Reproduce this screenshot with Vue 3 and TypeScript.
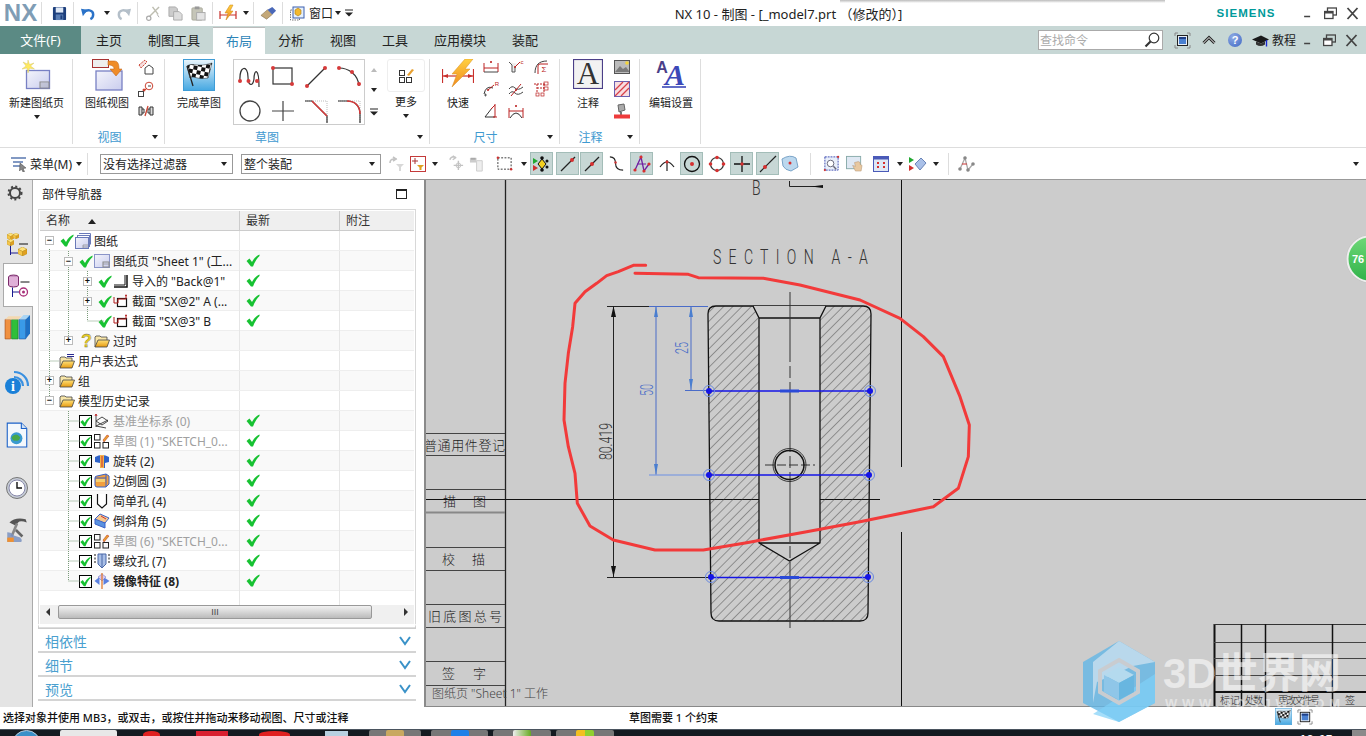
<script setup lang="ts">
interface Tool {
  id: string
  x: number
  w: number
  on?: boolean
  label?: string
  cls?: string
  s?: number
  ml?: number
}

// place tools left to right, the gap comes from where the next one should start
const flow = (items: Tool[], start = 0): Tool[] => {
  let cur = start
  return items.map((t) => {
    const out = { ...t, ml: t.x - cur }
    cur = t.x + t.w
    return out
  })
}
const sep = (x: number): Tool => ({ id: 'sep', x, w: 1 })
const dd = (x: number): Tool => ({ id: 'dd', x, w: 7 })

const titleTools = flow([
  { id: 'text', x: 4, w: 33, label: 'NX', cls: 'nx' },
  sep(41),
  { id: 'save', x: 52, w: 15 },
  sep(73),
  { id: 'undo', x: 81, w: 15 },
  dd(103),
  { id: 'redo', x: 116, w: 15 },
  sep(137),
  { id: 'cut', x: 145, w: 15 },
  { id: 'copy', x: 168, w: 15 },
  { id: 'paste', x: 191, w: 15 },
  sep(212),
  { id: 'dimq', x: 219, w: 18 },
  dd(242),
  sep(253),
  { id: 'eraser', x: 260, w: 17 },
  sep(282),
  { id: 'win', x: 290, w: 16 },
  { id: 'text', x: 309, w: 24, label: '窗口' },
  dd(334),
  { id: 'more', x: 345, w: 8 },
  { id: 'text', x: 673, w: 231, label: 'NX 10 - 制图 - [_model7.prt （修改的）]', cls: 'title' },
  { id: 'text', x: 1215, w: 62, label: 'SIEMENS', cls: 'siemens' },
  { id: 'min', x: 1303, w: 9 },
  { id: 'rest', x: 1324, w: 13 },
  { id: 'close', x: 1346, w: 13 },
])

const tabs = ['主页', '制图工具', '布局', '分析', '视图', '工具', '应用模块', '装配']

const tabTools = flow([
  { id: 'full', x: 1174, w: 17 },
  { id: 'up', x: 1202, w: 14 },
  { id: 'text', x: 1228, w: 14, label: '?', cls: 'helpbtn' },
  { id: 'hat', x: 1252, w: 17 },
  { id: 'text', x: 1272, w: 24, label: '教程' },
  { id: 'min', x: 1303, w: 9 },
  { id: 'rest', x: 1323, w: 13 },
  { id: 'close', x: 1345, w: 13 },
], 1163)

const selTools = flow([
  { id: 'f1', x: 390, w: 16 },
  { id: 'f2', x: 411, w: 16 },
  dd(432),
  { id: 's1', x: 449, w: 17 },
  { id: 's2', x: 470, w: 17 },
  { id: 's3', x: 497, w: 17 },
  dd(521),
  { id: 's4', x: 531, w: 23, s: 18, on: true },
  { id: 's5', x: 557, w: 23, s: 18, on: true },
  { id: 's6', x: 581, w: 23, s: 18, on: true },
  { id: 's7', x: 609, w: 17 },
  { id: 's8', x: 631, w: 23, s: 18, on: true },
  { id: 's9', x: 659, w: 18 },
  { id: 's10', x: 681, w: 23, s: 18, on: true },
  { id: 's11', x: 709, w: 18 },
  { id: 's12', x: 731, w: 23, s: 18, on: true },
  { id: 's13', x: 757, w: 23, s: 18, on: true },
  { id: 's14', x: 782, w: 18 },
  sep(811),
  { id: 's15', x: 824, w: 17 },
  { id: 's16', x: 847, w: 17 },
  { id: 's17', x: 874, w: 16 },
  dd(897),
  { id: 's18', x: 910, w: 18 },
  dd(933),
  sep(949),
  { id: 's19', x: 958, w: 18 },
  dd(1353),
], 382)

interface Row {
  d: number
  exp?: '+' | '-'
  mark?: 'check' | 'q' | 'box'
  icon: string
  text: string
  fresh?: boolean
  gray?: boolean
  bold?: boolean
}

const rows: Row[] = [
  { d: 0, exp: '-', mark: 'check', icon: 'sheets', text: '图纸' },
  { d: 1, exp: '-', mark: 'check', icon: 'sheet1', text: '图纸页 "Sheet 1" (工...', fresh: true },
  { d: 2, exp: '+', mark: 'check', icon: 'back', text: '导入的 "Back@1"', fresh: true },
  { d: 2, exp: '+', mark: 'check', icon: 'section', text: '截面 "SX@2" A (...', fresh: true },
  { d: 2, mark: 'check', icon: 'section', text: '截面 "SX@3" B', fresh: true },
  { d: 1, exp: '+', mark: 'q', icon: 'folder', text: '过时' },
  { d: 0, icon: 'folder2', text: '用户表达式' },
  { d: 0, exp: '+', icon: 'folder', text: '组' },
  { d: 0, exp: '-', icon: 'folder', text: '模型历史记录' },
  { d: 1, mark: 'box', icon: 'csys', text: '基准坐标系 (0)', fresh: true, gray: true },
  { d: 1, mark: 'box', icon: 'sk', text: '草图 (1) "SKETCH_0...', fresh: true, gray: true },
  { d: 1, mark: 'box', icon: 'rev', text: '旋转 (2)', fresh: true },
  { d: 1, mark: 'box', icon: 'blend', text: '边倒圆 (3)', fresh: true },
  { d: 1, mark: 'box', icon: 'hole', text: '简单孔 (4)', fresh: true },
  { d: 1, mark: 'box', icon: 'cham', text: '倒斜角 (5)', fresh: true },
  { d: 1, mark: 'box', icon: 'sk', text: '草图 (6) "SKETCH_0...', fresh: true, gray: true },
  { d: 1, mark: 'box', icon: 'thread', text: '螺纹孔 (7)', fresh: true },
  { d: 1, mark: 'box', icon: 'mirror', text: '镜像特征 (8)', fresh: true, bold: true },
]

const rail = [
  { id: 'r-asm', h: 35, mt: 22 },
  { id: 'r-part', h: 44, mt: 0, active: true },
  { id: 'r-books', h: 40, mt: 0 },
  { id: 'r-info', h: 40, mt: 15 },
  { id: 'r-doc', h: 40, mt: 13 },
  { id: 'r-clock', h: 40, mt: 13 },
  { id: 'r-tools', h: 40, mt: 2 },
]

const gallery = ['g1', 'g2', 'g3', 'g4', 'g5', 'g6', 'g7', 'g8']
const dimSmall = ['d1', 'd4', 'd6', 'd2', 'd5', 'd7', 'd3', 'd8']
// little letters that sit on some of the dimension icons
const dimLetter: Record<string, { t: string; x: number; y: number; s: number }> = {
  d2: { t: 'R', x: 14, y: 5, s: 6 },
  d4: { t: 'c', x: 14, y: 5, s: 6 },
  d6: { t: 'Σ', x: 11, y: 13, s: 8 },
}
const sections = ['相依性', '细节', '预览']

// red pen stroke, read off the zoomed crop (3x, origin 560,240)
const penRaw = [
  [257, 76], [220, 76], [175, 95], [140, 107], [110, 130], [75, 155], [45, 190], [38, 260], [25, 340],
  [15, 430], [12, 540], [25, 620], [45, 700], [52, 790], [90, 858], [160, 900], [285, 930], [430, 930],
  [560, 908], [740, 875], [900, 845], [1120, 800], [1195, 745], [1225, 650], [1228, 555], [1200, 470],
  [1150, 350], [1090, 290], [1020, 235], [900, 180], [720, 135], [610, 115], [415, 113], [385, 103], [225, 100],
]
const pen = penRaw.map(([x, y]) => `${560 + x / 3},${240 + y / 3}`).join(' ')

const nodes = [
  [709, 391], [870, 391], [709, 475], [869, 475], [711, 577], [868, 577],
]
const leftLines = [433, 455, 489, 547, 570, 604, 627, 661, 685]
const blockRows = [642, 658, 675]
const blockCols = [1241, 1265, 1332]
</script>

<template>
  <div class="app">
    <svg class="defs" width="0" height="0">
      <defs>
        <linearGradient id="lav" x1="0" y1="0" x2="1" y2="1"><stop offset="0" stop-color="#f4f4fb" /><stop offset="1" stop-color="#c9cdee" /></linearGradient>
        <linearGradient id="sky" x1="0" y1="0" x2="0" y2="1"><stop offset="0" stop-color="#eaf5fb" /><stop offset="1" stop-color="#45a8e2" /></linearGradient>
        <linearGradient id="fold" x1="0" y1="0" x2="0" y2="1"><stop offset="0" stop-color="#ffe27a" /><stop offset="1" stop-color="#e69a10" /></linearGradient>
        <linearGradient id="bolt" x1="0" y1="0" x2="0" y2="1"><stop offset="0" stop-color="#ffd040" /><stop offset="1" stop-color="#f08a20" /></linearGradient>
        <linearGradient id="ball" x1="0" y1="0" x2="0" y2="1"><stop offset="0" stop-color="#6fd878" /><stop offset="1" stop-color="#30b24a" /></linearGradient>
        <pattern id="chk" width="8" height="8" patternUnits="userSpaceOnUse" patternTransform="rotate(12)">
          <rect width="8" height="8" fill="#fff" /><rect width="4" height="4" fill="#111" /><rect x="4" y="4" width="4" height="4" fill="#111" />
        </pattern>
        <pattern id="hatch" width="6.5" height="6.5" patternUnits="userSpaceOnUse" patternTransform="rotate(45)">
          <line x1="0" y1="0" x2="0" y2="6.5" stroke="#333" stroke-width=".8" />
        </pattern>
      </defs>

      <!-- quick access -->
      <symbol id="save" viewBox="0 0 16 16"><rect x="1" y="1" width="14" height="14" rx="1" fill="#1d3f7c" /><rect x="4" y="1.5" width="8" height="5.5" fill="#dfe8f5" /><rect x="4" y="9" width="8" height="6" fill="#5b7fb5" /><rect x="9" y="10" width="2" height="4" fill="#1d3f7c" /></symbol>
      <symbol id="undo" viewBox="0 0 16 16"><path d="M3 7C6 3 13 4 13 9c0 2-1 4-3 5" fill="none" stroke="#2a72c8" stroke-width="2.6" /><path d="M0 3l7 1-5 7z" fill="#2a72c8" /></symbol>
      <symbol id="redo" viewBox="0 0 16 16"><path d="M13 7C10 3 3 4 3 9c0 2 1 4 3 5" fill="none" stroke="#b4bfc9" stroke-width="2.6" /><path d="M16 3l-7 1 5 7z" fill="#b4bfc9" /></symbol>
      <symbol id="cut" viewBox="0 0 16 16"><path d="M15 1L5 11M8 1l6 8" stroke="#bdbdb0" stroke-width="1.5" /><circle cx="4" cy="13" r="2.3" fill="none" stroke="#aaa" stroke-width="1.3" /><path d="M13 9l2 3" stroke="#aaa" /></symbol>
      <symbol id="copy" viewBox="0 0 16 16"><path d="M1 1h7l2 2v8H1z" fill="#ccc" stroke="#aaa" /><path d="M6 6h6l3 3v6H6z" fill="#ddd" stroke="#aaa" /></symbol>
      <symbol id="paste" viewBox="0 0 16 16"><rect x="1" y="2" width="11" height="13" rx="1" fill="#c5c5b8" stroke="#a9a99a" /><rect x="4" y="0.5" width="5" height="3" fill="#999" /><rect x="6" y="7" width="9" height="8" fill="#e3e3e3" stroke="#aaa" /></symbol>
      <symbol id="dimq" viewBox="0 0 18 16"><path d="M1 6v8M17 6v8M1 10h16" stroke="#c9302c" stroke-width="1.2" /><path d="M11 0L6 8h3l-2 7 7-9h-3l3-6z" fill="url(#bolt)" stroke="#c88010" stroke-width=".5" /></symbol>
      <symbol id="eraser" viewBox="0 0 18 16"><path d="M1 10l7-6 5 5-6 5z" fill="#c4a878" stroke="#857050" stroke-width=".6" /><path d="M8 4l5-3 4 4-4 4z" fill="#4a68b8" /></symbol>
      <symbol id="win" viewBox="0 0 16 16"><rect x="0.5" y="5" width="9" height="10" fill="none" stroke="#777" stroke-dasharray="1.5 1" /><rect x="3" y="2" width="11" height="11" fill="#e6f0fa" stroke="#3a5fb0" /><path d="M5 5l3-2 3 2v4l-3 2-3-2z" fill="#f3b92e" stroke="#a87a10" stroke-width=".6" /></symbol>
      <symbol id="more" viewBox="0 0 8 8"><path d="M0 1h8" stroke="#222" /><path d="M0 3.500h8L4 7.500z" fill="#222" /></symbol>
      <symbol id="min" viewBox="0 0 9 12"><rect y="9" width="8" height="2" fill="#444" /></symbol>
      <symbol id="rest" viewBox="0 0 13 12"><rect x="3.500" y="0.500" width="9" height="7" fill="none" stroke="#444" stroke-width="1.300" /><rect x="0.600" y="4" width="8.400" height="7" fill="#fff" stroke="#444" stroke-width="1.300" /><rect x="0.600" y="4" width="8.400" height="2" fill="#444" /></symbol>
      <symbol id="close" viewBox="0 0 13 12"><path d="M1.500 0.500l10 11M11.500 0.500l-10 11" stroke="#444" stroke-width="1.800" /></symbol>
      <symbol id="full" viewBox="0 0 17 17"><path d="M1 4V1h3M13 1h3v3M16 13v3h-3M4 16H1v-3" fill="none" stroke="#888" /><rect x="3.500" y="3.500" width="10" height="10" fill="#e8eef6" stroke="#222" /><rect x="5" y="5" width="7" height="7" fill="#4a80d0" /><rect x="5" y="5" width="7" height="2" fill="#1e3f88" /></symbol>
      <symbol id="up" viewBox="0 0 14 14"><path d="M1.500 10L7 4.500 12.500 10" fill="none" stroke="#222" stroke-width="3" /><path d="M1.500 10L7 4.500 12.500 10" fill="none" stroke="#fff" stroke-width="1" /></symbol>
      <symbol id="hat" viewBox="0 0 17 14"><path d="M0 6l9-4 8 4-8 4z" fill="#1a1a1a" /><path d="M4 8v3c3 2 6 2 9 0V8L9 10z" fill="#333" /><path d="M14.500 6.500V13" stroke="#1a2ad0" stroke-width="1.400" /></symbol>
      <symbol id="search" viewBox="0 0 16 16"><circle cx="10" cy="6" r="4.800" fill="#fff" stroke="#333" stroke-width="1.200" /><path d="M6.500 9.500L1.500 14.500" stroke="#333" stroke-width="2.200" /></symbol>

      <!-- ribbon large -->
      <symbol id="newsheet" viewBox="0 0 30 32"><rect x="4.500" y="11.500" width="23" height="18" fill="url(#lav)" stroke="#7880c4" stroke-width="1.300" /><rect x="18" y="23" width="9" height="6" fill="none" stroke="#888" /><path d="M18 25h9M18 27h9" stroke="#999" stroke-width=".6" /><path d="M6 1l1.500 4.500L12 4 8.500 7l4 3-5-.8L6 14 5 9 0 10l4-3L1 3l4.500 2z" fill="#ffe95e" stroke="#cfc060" stroke-width=".4" /></symbol>
      <symbol id="sheetview" viewBox="0 0 32 32"><rect x="1.500" y="0.500" width="16" height="8" fill="#eee" stroke="#a83232" /><rect x="5" y="12" width="26" height="19" fill="url(#lav)" stroke="#7880c4" stroke-width="1.300" /><path d="M17 2h6c4 0 5 3 5 8h3l-6 7-6-7h4c0-2-1-4-6-4z" fill="#ef8c28" stroke="#b85a10" stroke-width=".5" /></symbol>
      <symbol id="flag" viewBox="0 0 32 32"><rect x="0.500" y="0.500" width="31" height="31" fill="url(#sky)" stroke="#3f9cd6" /><path d="M4 7C10 3 14 9 29 4L25 19C13 21 11 16 7 19z" fill="url(#chk)" stroke="#222" stroke-width=".5" /><path d="M4 7l6 20" stroke="#222" stroke-width="1.300" /></symbol>
      <symbol id="boltl" viewBox="0 0 32 30"><path d="M0.500 10v14M31.500 10v14" stroke="#c9302c" stroke-width="1.200" /><path d="M1 17h30" stroke="#c9302c" stroke-width="1.200" /><path d="M1 17l5-2v4zM31 17l-5-2v4z" fill="#c9302c" /><path d="M23 0h8l-8 10h5L10 28l5-13h-5z" fill="url(#bolt)" stroke="#d89020" stroke-width=".5" /></symbol>
      <symbol id="pic" viewBox="0 0 16 16"><rect x="0.500" y="1.500" width="15" height="13" fill="#bbb" stroke="#555" /><path d="M1 13l5-6 3 3 3-2 3 4v1H1z" fill="#7a7a7a" /><circle cx="13" cy="4" r="1.800" fill="#f3d43a" /></symbol>
      <symbol id="hatchi" viewBox="0 0 16 16"><rect x="0.500" y="0.500" width="15" height="15" fill="#f8dde0" stroke="#6a60b0" /><path d="M1 9l8-8M1 15L15 1M7 15l8-8" stroke="#d8404a" stroke-width="1.300" /></symbol>
      <symbol id="paint" viewBox="0 0 16 16"><path d="M4 2l6-1 1 6-6 2z" fill="#aaa" stroke="#666" /><path d="M7 9v3" stroke="#777" stroke-width="2" /><rect x="0" y="11.500" width="16" height="4" fill="#ee3b3b" /></symbol>

      <!-- ribbon small -->
      <symbol id="v1" viewBox="0 0 16 16"><path d="M1 6l6-5 2 2-6 6z" fill="#f6dede" stroke="#c43" stroke-dasharray="2 1" /><path d="M7 9l4-3 4 3v6H7z" fill="#fff" stroke="#444" /></symbol>
      <symbol id="v2" viewBox="0 0 16 16"><circle cx="11" cy="5" r="3.800" fill="#fff" stroke="#c43" /><path d="M10 5h3" stroke="#444" /><path d="M2 14l7-7" stroke="#c43" /><circle cx="6" cy="9" r="1.500" fill="#c43" /><rect x="0.500" y="10.500" width="5" height="5" fill="#fff" stroke="#444" /></symbol>
      <symbol id="v3" viewBox="0 0 16 16"><path d="M1 4h3v8H1zM12 4h3v8h-3z" fill="#ddd" stroke="#333" /><path d="M4 6h2v4H4M12 6h-2v4h2" fill="none" stroke="#333" /><path d="M7 13l3-10" stroke="#c43" stroke-width="1.300" /></symbol>
      <symbol id="d1" viewBox="0 0 16 16"><path d="M1 4v9M15 4v9M1 9h14" stroke="#b22" /><path d="M1 13h14" stroke="#444" /><path d="M7 2l2 2M9 2L7 4" stroke="#b22" stroke-width=".8" /></symbol>
      <symbol id="d2" viewBox="0 0 16 16"><path d="M1 13Q3 4 10 7" fill="none" stroke="#333" /><path d="M5 9l6-5" stroke="#b22" /><circle cx="5" cy="9" r="1" fill="#b22" /><path d="M1 14h3M2.500 12.500v3" stroke="#333" stroke-width=".7" /></symbol>
      <symbol id="d3" viewBox="0 0 16 16"><path d="M2 14L9 5M2 14h10" stroke="#333" /><path d="M12 1v13M10 14h4" stroke="#b22" /><path d="M8 6l4-4" stroke="#b22" /></symbol>
      <symbol id="d4" viewBox="0 0 16 16"><path d="M1 3l3 3v7h3V8l3-3" fill="#eee" stroke="#555" /><path d="M7 8l5-5" stroke="#b22" /><circle cx="7" cy="8" r="1" fill="#b22" /></symbol>
      <symbol id="d5" viewBox="0 0 16 16"><path d="M1 8q3-4 6-1t8-1M1 13q3-4 6-1t8-1" fill="none" stroke="#444" /><path d="M3 15L13 3" stroke="#b22" /><circle cx="8" cy="9" r="1" fill="#b22" /></symbol>
      <symbol id="d6" viewBox="0 0 16 16"><path d="M2 14C2 6 6 2 14 2" fill="none" stroke="#444" /><path d="M5 15V7q0-2 2-2h8" fill="none" stroke="#b22" /></symbol>
      <symbol id="d7" viewBox="0 0 16 16"><path d="M1 3h12M4 7h7M4 3v8M11 3v8" stroke="#b22" stroke-dasharray="2 1" /><rect x="11" y="1" width="4" height="3" fill="none" stroke="#b22" stroke-width=".7" /><rect x="11" y="6" width="4" height="3" fill="none" stroke="#b22" stroke-width=".7" /><rect x="3" y="12" width="3" height="3" fill="none" stroke="#b22" stroke-width=".7" /><rect x="8" y="12" width="3" height="3" fill="none" stroke="#b22" stroke-width=".7" /></symbol>
      <symbol id="d8" viewBox="0 0 16 16"><path d="M1 5v10M15 5v10M1 8h14" stroke="#b22" /><path d="M2 15Q8 5 14 15" fill="none" stroke="#333" /><path d="M7 2l2 2M9 2L7 4" stroke="#b22" stroke-width=".8" /></symbol>

      <!-- sketch gallery -->
      <symbol id="g1" viewBox="0 0 24 24"><path d="M2 16C1 0 10 0 10 12c0 9 5 10 6 2 0-10 5-12 5 8" fill="none" stroke="#333" stroke-width="1.200" /><g fill="#d63a3a"><circle cx="2" cy="16" r="2" /><circle cx="10.500" cy="16" r="2" /><circle cx="19" cy="16" r="2" /></g></symbol>
      <symbol id="g2" viewBox="0 0 24 24"><rect x="2" y="3" width="19" height="16" fill="none" stroke="#333" stroke-width="1.200" /><circle cx="2" cy="3" r="2" fill="#d63a3a" /><circle cx="21" cy="19" r="2" fill="#d63a3a" /></symbol>
      <symbol id="g3" viewBox="0 0 24 24"><path d="M3 21L21 3" stroke="#333" stroke-width="1.200" /><circle cx="3" cy="21" r="2" fill="#d63a3a" /><circle cx="21" cy="3" r="2" fill="#d63a3a" /></symbol>
      <symbol id="g4" viewBox="0 0 24 24"><path d="M2 3c9 0 19 6 20 18" fill="none" stroke="#333" stroke-width="1.200" /><g fill="#d63a3a"><circle cx="2" cy="3" r="2" /><circle cx="15" cy="7" r="2" /><circle cx="22" cy="19" r="2" /></g></symbol>
      <symbol id="g5" viewBox="0 0 24 24"><circle cx="12" cy="12" r="10" fill="none" stroke="#444" stroke-width="1.300" /></symbol>
      <symbol id="g6" viewBox="0 0 24 24"><path d="M12 2v20M1 12h22" stroke="#444" stroke-width="1.200" /></symbol>
      <symbol id="g7" viewBox="0 0 24 24"><path d="M1 2h22v22" fill="none" stroke="#bbb" stroke-dasharray="1 1" /><path d="M1 2h7l15 15v8" fill="none" stroke="#333" stroke-width="1.200" /><path d="M8 2l15 15" stroke="#d63a3a" stroke-width="1.500" /></symbol>
      <symbol id="g8" viewBox="0 0 24 24"><path d="M1 2h22v22" fill="none" stroke="#bbb" stroke-dasharray="1 1" /><path d="M1 2h9c8 0 13 5 13 13v9" fill="none" stroke="#333" stroke-width="1.200" /><path d="M10 2c8 0 13 5 13 13" fill="none" stroke="#d63a3a" stroke-width="1.500" /></symbol>
      <symbol id="moreb" viewBox="0 0 16 16"><rect x="1.500" y="2.500" width="5" height="5" fill="none" stroke="#333" /><rect x="1.500" y="9.500" width="5" height="5" fill="none" stroke="#333" /><rect x="8.500" y="9.500" width="5" height="5" fill="none" stroke="#333" /><path d="M9 7l5-6 2 1-5 6z" fill="#e8a030" /></symbol>

      <!-- selection bar -->
      <symbol id="menu" viewBox="0 0 18 16"><path d="M1 2h15M3 6h10M3 10h10" stroke="#5a78b0" stroke-width="1.500" /><path d="M10 7l6 5-3 .5 1.500 3-1.500.5-1.500-3-2 2z" fill="#888" stroke="#444" stroke-width=".5" /></symbol>
      <symbol id="f1" viewBox="0 0 16 16"><path d="M1 7q0-4 4-4h3M4 1l3 2-3 2" fill="none" stroke="#c3c3c3" stroke-width="1.600" /><path d="M7 8h8l-3 3v4h-2v-4z" fill="#d8d8d8" /></symbol>
      <symbol id="f2" viewBox="0 0 16 16"><rect x="0.500" y="0.500" width="15" height="15" fill="#fff" stroke="#c43a3a" /><path d="M5 2v6M2 5h6" stroke="#a33" /><path d="M7 9h7l-2.500 2.500V14h-2v-2.500z" fill="#e0a020" /></symbol>
      <symbol id="s1" viewBox="0 0 18 18"><path d="M2 5q1-4 6-3M5 1l3 2-3 2" fill="none" stroke="#c3c3c3" stroke-width="1.500" /><path d="M11 6v10M6 11h10" stroke="#c3c3c3" stroke-width="1.500" /><circle cx="11" cy="11" r="2.500" fill="none" stroke="#c3c3c3" /></symbol>
      <symbol id="s2" viewBox="0 0 18 18"><path d="M1 3h7v5H1z" fill="#ccc" /><path d="M8 6h6v11H8z" fill="#eee" stroke="#ccc" /><path d="M2 4h5" stroke="#aaa" stroke-width="2" /></symbol>
      <symbol id="s3" viewBox="0 0 18 18"><rect x="2" y="3" width="14" height="12" fill="none" stroke="#333" stroke-dasharray="2 1.500" /><circle cx="2" cy="3" r="1.300" fill="#c33" /><circle cx="16" cy="15" r="1.300" fill="#c33" /></symbol>
      <symbol id="s4" viewBox="0 0 18 18"><path d="M5 9l4-5 4 5-4 5z" fill="#f3d020" stroke="#111" /><circle cx="9" cy="3" r="1.800" fill="#111" /><circle cx="14" cy="6" r="1.500" fill="#111" /><circle cx="14" cy="12" r="1.500" fill="#111" /><circle cx="9" cy="15" r="1.800" fill="#111" /><path d="M0 3l5 3-5 3z" fill="#20a830" /><path d="M0 10l5 3-5 3z" fill="#d03030" /></symbol>
      <symbol id="s5" viewBox="0 0 18 18"><path d="M2 16L16 2" stroke="#222" stroke-width="1.200" /><circle cx="13" cy="5" r="2" fill="#d63030" /></symbol>
      <symbol id="s6" viewBox="0 0 18 18"><path d="M2 16L16 2" stroke="#222" stroke-width="1.200" /><circle cx="9" cy="9" r="2" fill="#d63030" /></symbol>
      <symbol id="s7" viewBox="0 0 18 18"><path d="M2 2q6 0 6 7t8 7" fill="none" stroke="#222" stroke-width="1.200" /><circle cx="8" cy="8" r="1.300" fill="#c33" /></symbol>
      <symbol id="s8" viewBox="0 0 18 18"><path d="M2 15L8 2l3 14 5-7" fill="none" stroke="#7020a0" stroke-width="1.300" /><path d="M4 9h9" stroke="#7020a0" /><g fill="#d63030"><circle cx="2" cy="15" r="1.600" /><circle cx="8" cy="2" r="1.600" /><circle cx="11" cy="16" r="1.600" /><circle cx="16" cy="9" r="1.600" /></g></symbol>
      <symbol id="s9" viewBox="0 0 18 18"><path d="M2 12Q9 2 16 12" fill="none" stroke="#222" stroke-width="1.200" /><path d="M9 5v11" stroke="#222" stroke-width="1.200" /><circle cx="9" cy="7" r="1.500" fill="#d63030" /></symbol>
      <symbol id="s10" viewBox="0 0 18 18"><circle cx="9" cy="9" r="7.500" fill="none" stroke="#111" stroke-width="1.300" /><circle cx="9" cy="9" r="2" fill="#d63030" /></symbol>
      <symbol id="s11" viewBox="0 0 18 18"><circle cx="9" cy="9" r="6.500" fill="none" stroke="#333" stroke-width="1.200" /><g fill="#d63030"><circle cx="9" cy="2.500" r="1.800" /><circle cx="9" cy="15.500" r="1.800" /><circle cx="2.500" cy="9" r="1.800" /><circle cx="15.500" cy="9" r="1.800" /></g></symbol>
      <symbol id="s12" viewBox="0 0 18 18"><path d="M9 1v16M1 9h16" stroke="#111" stroke-width="1.300" /><circle cx="9" cy="9" r="1.700" fill="#d63030" /></symbol>
      <symbol id="s13" viewBox="0 0 18 18"><path d="M1 17L17 1" stroke="#222" stroke-width="1.200" /><circle cx="6" cy="12" r="2" fill="#d63030" /></symbol>
      <symbol id="s14" viewBox="0 0 18 18"><path d="M1 4q8-5 14-1l2 9-7 4Q4 15 2 11z" fill="#bcd8ee" stroke="#7aa4c8" /><circle cx="9" cy="8" r="1.500" fill="#d63030" /></symbol>
      <symbol id="s15" viewBox="0 0 18 18"><rect x="2" y="2" width="14" height="14" fill="#e8eefa" stroke="#3a4ab0" stroke-dasharray="2 1" /><circle cx="8" cy="9" r="3.500" fill="#fff" stroke="#667" /><path d="M11 12l3 3" stroke="#667" stroke-width="1.500" /><circle cx="16" cy="2" r="1.200" fill="#c33" /><circle cx="2" cy="16" r="1.200" fill="#c33" /></symbol>
      <symbol id="s16" viewBox="0 0 18 18"><rect x="0.500" y="1.500" width="15" height="13" fill="#dfe8f3" stroke="#8aa" /><path d="M9 8l1 4-3-1 3 6h6l1-6-2-1v-2l-2-1z" fill="#e8c8a0" stroke="#b09070" stroke-width=".5" /></symbol>
      <symbol id="s17" viewBox="0 0 16 16"><rect x="0.500" y="0.500" width="15" height="15" fill="#dfe8f5" stroke="#4a5ab8" /><rect x="0.500" y="0.500" width="15" height="3" fill="#4a5ab8" /><path d="M4 6h2v2H4zM10 6h2v2h-2zM4 10h2v2H4zM10 10h2v2h-2z" fill="#d63030" /></symbol>
      <symbol id="s18" viewBox="0 0 18 18"><path d="M0 2l5 3-5 3z" fill="#20a830" /><path d="M0 10l5 3-5 3z" fill="#d03030" /><path d="M6 9l6-6 5 5-6 7z" fill="#a9c0e8" stroke="#6a84b8" /></symbol>
      <symbol id="s19" viewBox="0 0 18 18"><path d="M3 14L8 3l3 12 5-6" fill="none" stroke="#aaa" stroke-width="1.300" /><g fill="#888"><circle cx="3" cy="14" r="1.800" /><circle cx="8" cy="3" r="1.800" /><circle cx="11" cy="15" r="1.800" /><circle cx="16" cy="9" r="1.800" /></g><path d="M5 9h5" stroke="#c33" /></symbol>

      <!-- navigator -->
      <symbol id="check" viewBox="0 0 14 13"><path d="M0.500 7L3.500 4.500 6 8C8 4 10.500 2 13.500 0.500V2C10.500 5 8.500 8.500 7 12.500H5z" fill="#17c232" /></symbol>
      <symbol id="sheets" viewBox="0 0 16 16"><path d="M4 0.500h11.500v11" fill="none" stroke="#6a7ab8" /><rect x="2.500" y="2.500" width="12" height="11" fill="#fff" stroke="#6a7ab8" /><rect x="0.500" y="4.500" width="13" height="11" fill="url(#lav)" stroke="#6a7ab8" /><path d="M8 12h5M8 14h5M8 12v3" stroke="#888" stroke-width=".7" /></symbol>
      <symbol id="sheet1" viewBox="0 0 16 16"><rect x="0.500" y="1.500" width="15" height="13" fill="url(#lav)" stroke="#8a94c8" /><rect x="9" y="9" width="6" height="5" fill="none" stroke="#888" /><path d="M9 11h6" stroke="#888" stroke-width=".7" /></symbol>
      <symbol id="back" viewBox="0 0 16 16"><path d="M1 14h13V2" fill="none" stroke="#111" stroke-width="1.500" /><path d="M1 12h11V2" fill="none" stroke="#111" stroke-width="1" /></symbol>
      <symbol id="section" viewBox="0 0 16 16"><rect x="4.500" y="5.500" width="9" height="8" fill="#fff" stroke="#111" stroke-width="1.200" /><path d="M1 4v6h4V6h8V2" fill="none" stroke="#b01818" stroke-width="1" /><path d="M12 3l1-2 1 2z" fill="#b01818" /></symbol>
      <symbol id="folder" viewBox="0 0 16 14"><path d="M1 13V3l1-1h4l1 1h6v3" fill="#f8e6a8" stroke="#444" stroke-width=".8" /><path d="M1 13l3-7h11.500L13 13z" fill="url(#fold)" stroke="#444" stroke-width=".8" /></symbol>
      <symbol id="folder2" viewBox="0 0 16 16"><path d="M8 1.500h7M8 3.500h7" stroke="#2a2a90" stroke-width="1" /><path d="M1 15V5l1-1h4l1 1h6v3" fill="#f8e6a8" stroke="#444" stroke-width=".8" /><path d="M1 15l3-7h11.500L13 15z" fill="url(#fold)" stroke="#444" stroke-width=".8" /></symbol>
      <symbol id="csys" viewBox="0 0 16 16"><path d="M2 1v13M2 13L14 7M2 13l10 2M8 4L2 8l6 4 6-4z" fill="none" stroke="#333" stroke-width=".9" /><path d="M1 3l1-2 1 2" stroke="#c33" fill="none" /></symbol>
      <symbol id="sk" viewBox="0 0 16 16"><rect x="0.500" y="1.500" width="5.500" height="5.500" fill="none" stroke="#222" /><rect x="0.500" y="9.500" width="5.500" height="5.500" fill="none" stroke="#222" /><rect x="9" y="9.500" width="5.500" height="5.500" fill="none" stroke="#222" /><path d="M9 7l4-5 2 1-5 6z" fill="#e8a030" stroke="#a00" stroke-width=".4" /></symbol>
      <symbol id="rev" viewBox="0 0 16 16"><path d="M1 4q7-4 14 0v5l-4 1v5H6v-5L1 9z" fill="#2d62c8" /><path d="M6 2h4v13H6z" fill="#f3b24a" /><path d="M8 3v11" stroke="#c33" /></symbol>
      <symbol id="blend" viewBox="0 0 16 16"><path d="M1 5q0-2 2-2l9-2 3 2v8l-3 3H3q-2 0-2-2z" fill="#f29f3f" stroke="#3a62c8" /><path d="M12 1v13M1 5h11" stroke="#3a62c8" /><path d="M2 6h9v3H2z" fill="#f6d070" /></symbol>
      <symbol id="hole" viewBox="0 0 16 16"><path d="M3.500 1v10l4.500 4 4.500-4V1" fill="#fff" stroke="#111" stroke-width="1.200" /></symbol>
      <symbol id="cham" viewBox="0 0 16 16"><path d="M1 6l5-5 9 4-4 5H3z" fill="#f6c890" stroke="#3a62c8" /><path d="M1 6l10 4v5L1 11z" fill="#5a92e0" stroke="#3a62c8" /><path d="M7 3l5 3" stroke="#c33" /></symbol>
      <symbol id="thread" viewBox="0 0 16 16"><path d="M1 1v9M15 1v9" stroke="#111" stroke-dasharray="2 1.500" /><path d="M4 1h8v10l-4 4-4-4z" fill="#a9bfe6" stroke="#4a68a8" /><path d="M8 1v14" stroke="#4a68a8" /></symbol>
      <symbol id="mirror" viewBox="0 0 16 16"><path d="M0.500 8l5-4v8z" fill="#5a80e0" /><path d="M15.500 8l-6-4v8z" fill="#5a80e0" /><path d="M4 4l4-3 4 3-4 4z" fill="#d8c8f0" stroke="#5a6ac0" stroke-width=".5" /><path d="M8 0v16" stroke="#e07a30" stroke-width="1.300" /></symbol>

      <!-- rail -->
      <symbol id="gear" viewBox="0 0 16 16"><circle cx="8" cy="8" r="5" fill="none" stroke="#444" stroke-width="2" /><circle cx="8" cy="8" r="6.500" fill="none" stroke="#444" stroke-width="2" stroke-dasharray="2 2.300" /></symbol>
      <symbol id="cube" viewBox="0 0 8 8"><path d="M4 0l4 2-4 2-4-2z" fill="#ffe27a" stroke="#b88a10" stroke-width=".4" /><path d="M0 2l4 2v4L0 6z" fill="#f6c64a" stroke="#b88a10" stroke-width=".4" /><path d="M8 2L4 4v4l4-2z" fill="#e0a020" stroke="#b88a10" stroke-width=".4" /></symbol>
      <symbol id="r-asm" viewBox="0 0 26 26">
        <path d="M6.500 11v11M6.500 20H15" stroke="#1a1a90" fill="none" />
        <path d="M15 11h9" stroke="#111" />
        <use href="#cube" x="3" y="0" width="7" height="7" />
        <use href="#cube" x="9" y="0" width="6" height="6" />
        <use href="#cube" x="3" y="6" width="7" height="7" />
        <use href="#cube" x="14" y="14" width="9" height="9" />
      </symbol>
      <symbol id="r-part" viewBox="0 0 26 26"><ellipse cx="7.500" cy="5" rx="5" ry="2" fill="#c890c0" stroke="#7a2a6a" /><path d="M2.500 5v8a5 2 0 0 0 10 0V5" fill="#e0b0d8" stroke="#7a2a6a" /><path d="M6.500 15.500V25M6.500 20H13" stroke="#1a1a90" fill="none" /><path d="M14.500 10h9" stroke="#111" /><circle cx="17.500" cy="20" r="4" fill="none" stroke="#a8307a" stroke-width="1.300" /><circle cx="17.500" cy="20" r="1.500" fill="#a8307a" /></symbol>
      <symbol id="r-books" viewBox="0 0 24 24"><path d="M1 5h5v18H1z" fill="#f09040" stroke="#a84a10" stroke-width=".6" /><path d="M7 5h6v18H7z" fill="#2fbf3a" stroke="#107a20" stroke-width=".6" /><path d="M14 5h6v18h-6z" fill="#3a9ae8" stroke="#1050a0" stroke-width=".6" /><path d="M14 5l4-4h6l-4 4z" fill="#a8d4f4" /><path d="M20 5l4-4v17l-4 5z" fill="#1e70c4" /><path d="M7 5l3-3h6l-3 3zM1 5l3-3h6L7 5z" fill="#f4d8b0" /></symbol>
      <symbol id="r-info" viewBox="0 0 26 26"><path d="M10 3c8 0 14 6 14 14M10 8c5 0 9 4 9 9" fill="none" stroke="#3a90e0" stroke-width="2.200" /><circle cx="9" cy="17" r="8" fill="#1a80d8" /></symbol>
      <symbol id="r-doc" viewBox="0 0 20 24"><path d="M1 1h13l5 5v17H1z" fill="#f4f8fc" stroke="#1a60c8" /><path d="M14 1v5h5" fill="#cfe0f4" stroke="#1a60c8" /><circle cx="9.500" cy="15" r="5.500" fill="#3a9ad0" /><path d="M5 14q4-5 8 0-1 4-4 3-3 1-4-3z" fill="#48a848" /></symbol>
      <symbol id="r-clock" viewBox="0 0 26 26"><circle cx="13" cy="13" r="10.500" fill="#c6ccd6" stroke="#777" /><circle cx="13" cy="13" r="8" fill="#fff" stroke="#88a" /><path d="M13 7v6h5" fill="none" stroke="#111" stroke-width="1.400" /></symbol>
      <symbol id="r-tools" viewBox="0 0 20 24"><path d="M3 5q5-5 15-3l1 3q-6-2-8 0l-2 3z" fill="#555" /><path d="M10 6l-5 12" stroke="#888" stroke-width="2.400" /><path d="M1 14q4 0 6 3l6 2q2 2 1 4H1z" fill="#7a92c0" opacity=".85" /><path d="M1 19h6v4H1z" fill="#f09030" /><path d="M9 12l6 6" stroke="#666" stroke-width="2.400" /></symbol>
    </svg>

    <header class="titlebar">
      <span
        v-for="t in titleTools"
        :key="t.id + t.x"
        class="tool"
        :class="[t.cls, { sep: t.id === 'sep', dd: t.id === 'dd' }]"
        :style="{ marginLeft: t.ml + 'px', width: t.w + 'px' }"
      >
        <template v-if="t.label">{{ t.label }}</template>
        <svg v-else-if="t.id !== 'sep' && t.id !== 'dd'" :width="t.w" :height="t.w"><use :href="'#' + t.id" /></svg>
      </span>
      <div class="shadow"></div>
    </header>

    <nav class="tabbar">
      <div class="file">文件(F)</div>
      <div v-for="tab in tabs" :key="tab" class="tab" :class="{ active: tab === '布局' }">{{ tab }}</div>
      <div class="tab-right">
        <div class="search">
          <span>查找命令</span>
          <svg width="16" height="16"><use href="#search" /></svg>
        </div>
        <span
          v-for="t in tabTools"
          :key="t.id + t.x"
          class="tool"
          :class="t.cls"
          :style="{ marginLeft: t.ml + 'px', width: t.w + 'px' }"
        >
          <template v-if="t.label">{{ t.label }}</template>
          <svg v-else :width="t.w" :height="t.w"><use :href="'#' + t.id" /></svg>
        </span>
      </div>
    </nav>

    <section class="ribbon">
      <div class="group g1">
        <div class="body">
          <div class="big w-full">
            <svg width="30" height="32"><use href="#newsheet" /></svg>
            <span>新建图纸页</span>
            <i class="tri"></i>
          </div>
        </div>
      </div>

      <div class="group g2">
        <div class="body">
          <div class="big">
            <svg width="32" height="32"><use href="#sheetview" /></svg>
            <span>图纸视图</span>
          </div>
          <div class="smalls one">
            <svg v-for="v in ['v1', 'v2', 'v3']" :key="v" width="16" height="16"><use :href="'#' + v" /></svg>
          </div>
        </div>
        <div class="foot off">视图<i class="tri corner"></i></div>
      </div>

      <div class="group g3">
        <div class="body">
          <div class="big">
            <svg width="32" height="32"><use href="#flag" /></svg>
            <span>完成草图</span>
          </div>
          <div class="gallery">
            <svg v-for="g in gallery" :key="g" width="24" height="24"><use :href="'#' + g" /></svg>
          </div>
          <div class="gal-arrows">
            <i class="tri up"></i>
            <i class="tri"></i>
            <svg width="8" height="8"><use href="#more" /></svg>
          </div>
          <div class="morebtn">
            <div class="morebox"><svg width="16" height="16"><use href="#moreb" /></svg></div>
            <span>更多</span>
            <i class="tri"></i>
          </div>
        </div>
        <div class="foot f-sketch">草图<i class="tri corner"></i></div>
      </div>

      <div class="group g4">
        <div class="body">
          <div class="big narrow">
            <svg width="32" height="30"><use href="#boltl" /></svg>
            <span class="low">快速</span>
          </div>
          <div class="smalls three">
            <svg v-for="d in dimSmall" :key="d" width="16" height="16">
              <use :href="'#' + d" />
              <text
                v-if="dimLetter[d]"
                :x="dimLetter[d].x"
                :y="dimLetter[d].y"
                :font-size="dimLetter[d].s"
                text-anchor="middle"
                fill="#b22"
                font-family="Liberation Sans"
              >{{ dimLetter[d].t }}</text>
            </svg>
          </div>
        </div>
        <div class="foot f-dim">尺寸<i class="tri corner"></i></div>
      </div>

      <div class="group g5">
        <div class="body">
          <div class="big narrow">
            <svg width="30" height="30">
              <rect x="0.500" y="0.500" width="29" height="29" fill="#f2f2f2" stroke="#4b3f88" stroke-width="1.200" />
              <text x="15" y="25" text-anchor="middle" font-family="Liberation Serif" font-size="31" fill="#333">A</text>
            </svg>
            <span class="low">注释</span>
          </div>
          <div class="smalls one">
            <svg width="16" height="16"><use href="#pic" /></svg>
            <svg width="16" height="16"><use href="#hatchi" /></svg>
            <svg width="16" height="16"><use href="#paint" /></svg>
          </div>
        </div>
        <div class="foot off">注释<i class="tri corner"></i></div>
      </div>

      <div class="group g6">
        <div class="body">
          <div class="big">
            <svg width="30" height="30">
              <text x="6" y="14" text-anchor="middle" font-family="Liberation Sans" font-weight="700" font-size="16" fill="#4b3f88">A</text>
              <text x="19" y="26" text-anchor="middle" font-family="Liberation Serif" font-style="italic" font-weight="700" font-size="30" fill="#3c48b8">A</text>
              <path d="M6 28h24" stroke="#3c48b8" stroke-width="1.600" />
            </svg>
            <span class="low">编辑设置</span>
          </div>
        </div>
      </div>
    </section>

    <section class="selbar">
      <svg class="menuic" width="18" height="16"><use href="#menu" /></svg>
      <span class="menutxt">菜单(M)</span>
      <i class="tri menudd"></i>
      <span class="vsep"></span>
      <div class="combo c1">没有选择过滤器<i class="tri"></i></div>
      <div class="combo c2">整个装配<i class="tri"></i></div>
      <span
        v-for="t in selTools"
        :key="t.id + t.x"
        class="tool"
        :class="{ on: t.on, sep: t.id === 'sep', dd: t.id === 'dd' }"
        :style="{ marginLeft: t.ml + 'px', width: t.w + 'px' }"
      >
        <svg v-if="t.id !== 'sep' && t.id !== 'dd'" :width="t.s ?? t.w" :height="t.s ?? t.w"><use :href="'#' + t.id" /></svg>
      </span>
    </section>

    <main class="work">
      <aside class="rail">
        <div class="gear"><svg width="16" height="16"><use href="#gear" /></svg></div>
        <div
          v-for="r in rail"
          :key="r.id"
          class="rail-item"
          :class="{ active: r.active }"
          :style="{ height: r.h + 'px', marginTop: r.mt + 'px' }"
        >
          <svg width="26" height="26">
            <use :href="'#' + r.id" />
            <text v-if="r.id === 'r-info'" x="9" y="22" text-anchor="middle" font-family="Liberation Serif" font-weight="700" font-size="14" fill="#fff">i</text>
          </svg>
        </div>
      </aside>

      <section class="panel">
        <div class="panel-head">
          <span>部件导航器</span>
          <i class="maxbox"></i>
        </div>

        <div class="table">
          <div class="thead">
            <div class="c-name">名称<i class="sort"></i></div>
            <div class="c-new">最新</div>
            <div class="c-note">附注</div>
          </div>

          <div class="tbody">
            <!-- dotted tree lines lie over the rows -->
            <svg class="treelines" width="376" height="375">
              <g stroke="#7a9a7a" stroke-dasharray="1 1" fill="none">
                <path d="M9.500 18V166M9.500 130H19M28.500 20V111M28.500 110H24M28.500 180V350H40M47.500 40V90H64" />
                <path d="M28.500 190H40M28.500 210H40M28.500 230H40M28.500 250H40M28.500 270H40M28.500 290H40M28.500 310H40M28.500 330H40" />
              </g>
            </svg>
            <div v-for="(r, i) in rows" :key="i" class="row" :class="{ odd: i % 2 === 1 }">
              <div class="c-name" :class="'d' + r.d">
                <span class="slot" :class="{ wide: !!r.mark }">
                  <i v-if="r.exp" class="exp">{{ r.exp === '-' ? '−' : '+' }}</i>
                </span>
                <span v-if="r.mark" class="mark">
                  <svg v-if="r.mark === 'check'" width="14" height="13"><use href="#check" /></svg>
                  <b v-else-if="r.mark === 'q'" class="q">?</b>
                  <i v-else class="cb"><svg width="12" height="11"><use href="#check" /></svg></i>
                </span>
                <svg class="ric" width="16" height="16"><use :href="'#' + r.icon" /></svg>
                <span class="txt" :class="{ gray: r.gray, bold: r.bold }">{{ r.text }}</span>
              </div>
              <div class="c-new"><svg v-if="r.fresh" width="14" height="13"><use href="#check" /></svg></div>
              <div class="c-note"></div>
            </div>
            <div class="row blank"><div class="c-name"></div><div class="c-new"></div><div class="c-note"></div></div>
          </div>

          <div class="hscroll">
            <i class="arr l"></i>
            <div class="thumb"><span>III</span></div>
            <i class="arr r"></i>
          </div>
        </div>
        <div class="tbl-end"></div>

        <div v-for="s in sections" :key="s" class="section">
          <span>{{ s }}</span>
          <svg width="12" height="10" viewBox="0 0 12 10"><path d="M1 1l5 7 5-7" fill="none" stroke="#3a92c8" stroke-width="2" /></svg>
        </div>
      </section>

      <section class="canvas">
        <svg width="940" height="526" viewBox="426 180 940 526">
          <!-- drawing frame on the left -->
          <g stroke="#222" fill="none">
            <path d="M505.500 180V706" stroke-width="1.300" />
            <path v-for="y in leftLines" :key="y" :d="`M426 ${y + 0.5}H505`" stroke="#444" />
            <path d="M426 512.500H505" stroke="#888" stroke-width="2" />
          </g>
          <g class="dwg-text">
            <text x="424" y="450" textLength="81" font-size="13">普通用件登记</text>
            <text x="443" y="506" font-size="13">描</text>
            <text x="473" y="506" font-size="13">图</text>
            <text x="442" y="564" font-size="13">校</text>
            <text x="472" y="564" font-size="13">描</text>
            <text x="428" y="621" textLength="74" font-size="13">旧底图总号</text>
            <text x="442" y="678" font-size="13">签</text>
            <text x="473" y="678" font-size="13">字</text>
            <text x="432" y="698" font-size="12" class="sheetlbl">图纸页 "Sheet 1" 工作</text>
          </g>

          <path d="M901.500 180V467M901.500 532V706" stroke="#111" />
          <path d="M426 499.500H880M933 499.500H1366" stroke="#111" />

          <text transform="translate(752 195) scale(.72 1)" font-size="19.500" class="thin">B</text>
          <path d="M789.500 181v5.500H823" fill="none" stroke="#222" />
          <path d="M811 186.500l12-1.500v3z" fill="#111" />
          <text transform="translate(713 264) scale(.72 1)" font-size="19.500" textLength="215" class="thin">SECTION A-A</text>

          <!-- part -->
          <path d="M716 306h147q8 0 8 8l-3 299q0 8-8 8H719q-8 0-8-8l-3-299q0-8 8-8z" fill="url(#hatch)" stroke="#111" stroke-width="1.300" />
          <path d="M753 306l6 12v225l30.500 18 30.500-18V318l6-12z" fill="#ccc" />
          <path d="M753 306l6 12v225l30.500 18 30.500-18V318l6-12M759 318h61M759 543h61" fill="none" stroke="#111" stroke-width="1.300" />
          <path d="M790 292V628" stroke="#333" stroke-dasharray="70 4 12 4" />
          <path d="M765 465h50" stroke="#333" stroke-dasharray="9 3" />
          <circle cx="789.500" cy="465" r="16.500" fill="none" stroke="#111" stroke-width=".8" />
          <circle cx="789.500" cy="465" r="14.500" fill="none" stroke="#111" stroke-width="1.500" />

          <!-- dimensions -->
          <path d="M607 306.500H649M607 577.500H708M613.500 306V577" stroke="#222" />
          <path d="M613.500 306l-2.500 11h5zM613.500 577l-2.500-11h5z" fill="#111" />
          <path d="M649 306.500H708M656 306V475M691 306V390M685 390.500H708" stroke="#4a6cc8" />
          <path d="M649 475H708" stroke="#8ca4dc" stroke-width="1.500" />
          <path d="M656 306l-2 11h4zM656 475l-2-11h4zM691 306l-2 11h4zM691 390l-2-11h4z" fill="#4a7ed0" />
          <text transform="translate(612 460) rotate(-90)" font-size="18" textLength="37" lengthAdjust="spacingAndGlyphs" class="thin">80.419</text>
          <text transform="translate(653 396) rotate(-90)" font-size="18" textLength="12" lengthAdjust="spacingAndGlyphs" class="thin blue">50</text>
          <text transform="translate(688 354) rotate(-90)" font-size="18" textLength="12" lengthAdjust="spacingAndGlyphs" class="thin blue">25</text>

          <!-- section lines with handles -->
          <path d="M709 391H870M709 475H869" stroke="#1414e6" stroke-width="1.600" />
          <path d="M711 577.500H868" stroke="#1414e6" stroke-width="1.300" />
          <path d="M780 391h19M780 577.500h19" stroke="#2a4ad8" stroke-width="3" />
          <g v-for="n in nodes" :key="n[0] + '-' + n[1]">
            <circle :cx="n[0]" :cy="n[1]" r="5.500" fill="none" stroke="#6a8ae0" />
            <circle :cx="n[0]" :cy="n[1]" r="3" fill="#1414e6" />
          </g>

          <!-- title block -->
          <g stroke="#111" fill="none">
            <path d="M1214.500 624V706" stroke-width="2" />
            <path d="M1214 624.500H1366" stroke="#333" />
            <path v-for="y in blockRows" :key="y" :d="`M1214 ${y + 0.5}H1366`" stroke="#444" />
            <path d="M1214 692H1366" stroke-width="2" />
            <path v-for="x in blockCols" :key="x" :d="`M${x + 0.5} 624V706`" stroke-width="1.500" />
          </g>
          <g class="dwg-text">
            <text x="1220" y="704" textLength="20" font-size="10">标记</text>
            <text x="1245" y="704" textLength="18" font-size="10">处数</text>
            <text x="1278" y="704" textLength="42" font-size="10">更改文件号</text>
            <text x="1345" y="704" font-size="10">签</text>
          </g>

          <polyline :points="pen" fill="none" stroke="#f23a3a" stroke-width="3" stroke-linejoin="round" stroke-linecap="round" />

          <circle cx="1370" cy="259" r="24" fill="#bbb" opacity=".6" />
          <circle cx="1370" cy="259" r="22.500" fill="url(#ball)" stroke="#eee" stroke-width="2" />
          <text x="1352" y="263" font-family="Liberation Sans" font-weight="700" font-size="11" fill="#fff">76</text>
        </svg>
      </section>
    </main>

    <footer class="status">
      <span class="st-left">选择对象并使用 MB3，或双击，或按住并拖动来移动视图、尺寸或注释</span>
      <span class="st-mid">草图需要 1 个约束</span>
      <svg class="st-flag" width="17" height="17"><use href="#flag" /></svg>
      <svg class="st-full" width="16" height="16"><use href="#full" /></svg>
    </footer>

    <div class="taskbar">
      <i class="orb"></i>
      <i class="task light"></i>
      <i class="spot round red s1"></i>
      <i class="spot red s2"></i>
      <i class="spot round red s3"></i>
      <i class="spot pale s4"></i>
      <i class="task grey"><b class="y"></b></i>
      <i class="task grey t2"><b class="bl"></b></i>
      <i class="task grey t3"><b class="gr"></b></i>
      <i class="task grey t3"><b class="y2"></b></i>
      <span class="clock">12:07</span>
      <i class="show"></i>
    </div>

    <!-- site watermark over the drawing and the status bar -->
    <svg class="mark-wm" width="290" height="100" viewBox="1080 636 290 100">
      <path d="M1119 641l36 21v41l-36 19-36-19v-41z" fill="#63b7e6" opacity=".8" />
      <path d="M1119 641l36 21-22 4-36 16-4 21v-41z" fill="#c4dded" opacity=".85" />
      <path d="M1155 703l-36 19-26-8 62-40z" fill="#7fd0f8" opacity=".7" />
      <path d="M1119 660l19 11v21l-19 11-19-11v-21z" fill="none" stroke="#c9ccd0" stroke-width="4" />
      <path d="M1119 667l15 8-15 8-15-8z" fill="#b4daee" />
      <path d="M1104 675l15 8v17l-15-8z" fill="#8fc6e8" />
      <path d="M1134 675l-15 8v17l15-8z" fill="#68b6e0" />
      <text x="1163" y="688" font-family="Liberation Sans, Noto Sans CJK SC, sans-serif" font-weight="700" font-size="42" fill="#fff" opacity=".55" textLength="178">3D世界网</text>
      <text x="1165" y="708" font-family="Liberation Sans, sans-serif" font-weight="700" font-size="13" fill="#fff" opacity=".45" textLength="175">WWW.3DSJW.COM</text>
    </svg>
  </div>
</template>

<style scoped>
.app {
  position: relative;
  width: 1366px;
  height: 736px;
  overflow: hidden;
  display: flex;
  flex-direction: column;
  background: #fff;
  color: #222;
  font-family: "Noto Sans", "Noto Sans CJK SC", sans-serif;
  font-size: 12px;
}
.defs { position: absolute; }

.tool {
  flex: none;
  display: flex;
  align-items: center;
  justify-content: center;
  white-space: nowrap;
}
.tool.sep { height: 22px; background: #ddd; align-self: center; }
.tool.dd::after,
.tri {
  content: "";
  display: block;
  width: 0;
  height: 0;
  border-left: 3.5px solid transparent;
  border-right: 3.5px solid transparent;
  border-top: 4px solid #222;
}

/* title row */
.titlebar {
  position: relative;
  flex: none;
  height: 26px;
  display: flex;
  align-items: center;
  font-size: 12px;
}
.nx {
  font: 700 24px "Liberation Sans", sans-serif;
  color: #7f9db5;
}
.title { font-size: 13px; }
.siemens {
  font: 700 11.5px "Liberation Sans", sans-serif;
  letter-spacing: 1px;
  color: #009a9a;
}
.shadow {
  position: absolute;
  left: 840px;
  top: 0;
  width: 325px;
  height: 3px;
  background: linear-gradient(#bbb, #fff);
}

/* tabs */
.tabbar {
  flex: none;
  height: 28px;
  display: flex;
  background: #c7d7d5;
  font-size: 13px;
}
.file {
  width: 81px;
  margin-right: 2px;
  background: #5b8a84;
  color: #fff;
  line-height: 28px;
  text-align: center;
}
.tab { padding: 0 13px; line-height: 28px; }
.tab.active {
  margin-top: 1px;
  line-height: 26px;
  background: #fff;
  color: #2c84b8;
  border-top: 1px solid #bbb;
}
.tab-right {
  margin-left: auto;
  padding-right: 8px;
  display: flex;
  align-items: center;
  font-size: 12px;
}
.helpbtn {
  height: 14px;
  border-radius: 50%;
  background: radial-gradient(circle at 35% 30%, #8eaae4, #3f68c4);
  color: #fff;
  font: 700 11px "Liberation Sans", sans-serif;
}
.search {
  width: 125px;
  height: 20px;
  box-sizing: border-box;
  border: 1px solid #aaa;
  background: #fff;
  color: #aaa;
  display: flex;
  align-items: center;
  justify-content: space-between;
  padding: 0 2px 0 1px;
  font-size: 12px;
}

/* ribbon */
.ribbon {
  flex: none;
  height: 94px;
  box-sizing: border-box;
  display: flex;
  border-bottom: 1px solid #ddd;
  font-size: 11px;
}
.group {
  position: relative;
  flex: none;
  height: 85px;
  margin-top: 5px;
  box-sizing: border-box;
  border-right: 1px solid #ddd;
  display: flex;
  flex-direction: column;
}
.g1 { width: 73px; }
.g2 { width: 92px; }
.g3 { width: 265px; }
.g4 { width: 130px; }
.g5 { width: 80px; }
.g6 { width: 61px; }
.body { flex: 1; display: flex; align-items: flex-start; }
.foot {
  height: 16px;
  line-height: 20px;
  text-align: center;
  color: #3f9ad0;
  font-size: 12px;
}
.foot.off { padding-right: 18px; }
.foot .corner { position: absolute; right: 6px; bottom: 5px; }
.f-sketch { padding-right: 30px; padding-left: 14px; width: 220px; box-sizing: border-box; }
.f-dim { padding-right: 18px; }
.big {
  width: 44px;
  margin-left: 12px;
  display: flex;
  flex-direction: column;
  align-items: center;
  white-space: nowrap;
}
.big span { margin-top: 5px; line-height: 14px; }
.big span.low { margin-top: 7px; }
.big.w-full { width: 72px; margin-left: 1px; }
.big .tri { margin-top: 5px; }
.big.narrow { width: 32px; }
.g5 .big.narrow { margin-left: 12px; }
.g6 .big { margin-left: 9px; }
.smalls { display: grid; }
.smalls.one { margin-left: 9px; grid-template-columns: 16px; gap: 6px; }
.g5 .smalls.one { margin-left: 10px; }
.smalls.three {
  margin-left: 9px;
  grid-template-columns: repeat(3, 16px);
  grid-template-rows: repeat(3, 16px);
  gap: 6px 9px;
}
.gallery {
  width: 132px;
  height: 66px;
  margin-left: 12px;
  box-sizing: border-box;
  border: 1px solid #ccc;
  display: grid;
  grid-template-columns: repeat(4, 24px);
  column-gap: 9px;
  row-gap: 9px;
  padding: 5px 0 0 4px;
}
.gal-arrows {
  width: 18px;
  margin-right: 4px;
  display: flex;
  flex-direction: column;
  align-items: center;
  gap: 16px;
  padding-top: 9px;
}
.gal-arrows .up { transform: rotate(180deg); border-top-color: #bbb; }
.morebtn {
  width: 38px;
  display: flex;
  flex-direction: column;
  align-items: center;
}
.morebox {
  width: 38px;
  height: 33px;
  box-sizing: border-box;
  border: 1px solid #eee;
  border-radius: 3px;
  display: flex;
  align-items: center;
  justify-content: center;
}
.morebtn span { margin-top: 3px; line-height: 14px; }
.morebtn .tri { margin-top: 5px; }

/* selection bar */
.selbar {
  flex: none;
  height: 32px;
  box-sizing: border-box;
  border-bottom: 1px solid #999;
  display: flex;
  align-items: center;
  font-size: 12px;
}
.menuic { margin-left: 10px; }
.menutxt { width: 44px; margin-left: 2px; white-space: nowrap; }
.menudd { margin-left: 2px; }
.vsep { width: 1px; height: 22px; background: #ddd; margin-left: 5px; }
.combo {
  height: 20px;
  box-sizing: border-box;
  border: 1px solid #999;
  display: flex;
  align-items: center;
  justify-content: space-between;
  padding: 0 5px 0 2px;
  background: #fff;
}
.c1 { width: 133px; margin-left: 12px; }
.c2 { width: 140px; margin-left: 8px; }
.tool.on {
  height: 23px;
  background: #c7d7d5;
  box-shadow: inset 0 0 0 1px #a3bdb8;
}

/* main area */
.work {
  flex: none;
  height: 527px;
  display: flex;
}
.rail {
  flex: none;
  width: 33px;
  box-sizing: border-box;
  background: #e4e4e4;
  border-right: 1px solid #aaa;
  display: flex;
  flex-direction: column;
}
.gear {
  height: 26px;
  display: flex;
  align-items: center;
  justify-content: center;
  padding-right: 3px;
}
.rail-item {
  display: flex;
  align-items: center;
  justify-content: center;
  padding-left: 2px;
  flex: none;
  box-sizing: border-box;
}
.rail-item.active {
  width: 30px;
  margin-left: 3px;
  padding-left: 0;
  background: #fff;
  border: 1px solid #aaa;
  border-right: 0;
}
.panel {
  flex: none;
  width: 393px;
  box-sizing: border-box;
  padding-left: 5px;
  border-right: 2px solid #8a8a8a;
  background: #fff;
  display: flex;
  flex-direction: column;
}
.panel-head {
  flex: none;
  height: 27px;
  display: flex;
  align-items: center;
  justify-content: space-between;
  padding: 0 17px 2px 4px;
}
.maxbox {
  width: 11px;
  height: 10px;
  box-sizing: border-box;
  border: 1px solid #222;
  border-top-width: 2px;
}
.table {
  flex: none;
  width: 378px;
  box-sizing: border-box;
  border: 1px solid #d8d8d8;
  border-bottom: 0;
  padding: 1px 1px 0;
}
.thead, .row { display: grid; grid-template-columns: 200px 100px 74px; }
.thead {
  height: 20px;
  background: #efefef;
  border-bottom: 1px solid #ccc;
  line-height: 19px;
  box-sizing: border-box;
  color: #333;
}
.thead > div { padding-left: 6px; border-right: 1px solid #ccc; position: relative; }
.thead > div:last-child { border-right: 0; }
.sort {
  position: absolute;
  left: 48px;
  top: 8px;
  border-left: 4.5px solid transparent;
  border-right: 4.5px solid transparent;
  border-bottom: 5px solid #222;
}
.tbody { position: relative; }
.treelines { position: absolute; left: 0; top: 0; pointer-events: none; }
.row {
  height: 20px;
  box-sizing: border-box;
  border-bottom: 1px solid #eee;
}
.row.odd { background: #f9f9f9; }
.row.blank { height: 14px; border-bottom: 0; }
.row > div { border-right: 1px solid #e6e6e6; }
.row > div:last-child { border-right: 0; }
.row .c-name {
  display: flex;
  align-items: center;
  padding-left: 5px;
  overflow: hidden;
  white-space: nowrap;
}
.row .d1 { padding-left: 24px; }
.row .d2 { padding-left: 43px; }
.row .c-new { padding: 3px 0 0 6px; }
.slot { flex: none; width: 14px; }
.slot.wide { width: 15px; }
.exp {
  display: block;
  position: relative;
  width: 9px;
  height: 9px;
  box-sizing: border-box;
  border: 1px solid #bbb;
  background: #fff;
  font: 700 9px/7px "Liberation Sans", sans-serif;
  font-style: normal;
  text-align: center;
  color: #111;
}
.mark { flex: none; width: 15px; display: flex; align-items: center; }
.q { font: 700 18px/16px "Liberation Sans", sans-serif; color: #e8cc20; padding-left: 2px; -webkit-text-stroke: .3px #665; }
.cb {
  display: flex;
  align-items: center;
  justify-content: center;
  width: 13px;
  height: 13px;
  box-sizing: border-box;
  border: 1px solid #000;
  background: #fff;
}
.ric { flex: none; margin-right: 3px; }
.txt.gray { color: #a0a0a0; }
.txt.bold { font-weight: 700; }
.hscroll {
  height: 19px;
  display: flex;
  align-items: flex-start;
  background: #f0f0f0;
  padding: 0 6px;
}
.thumb {
  width: 314px;
  height: 14px;
  margin-left: 8px;
  box-sizing: border-box;
  border: 1px solid #999;
  border-radius: 2px;
  background: linear-gradient(#f2f2f2, #bbb);
  text-align: center;
  font: 9px/12px "Liberation Sans", sans-serif;
  color: #444;
}
.arr { width: 0; height: 0; margin-top: 3px; border-top: 4px solid transparent; border-bottom: 4px solid transparent; }
.arr.l { border-right: 4px solid #333; }
.arr.r { margin-left: auto; border-left: 4px solid #333; }
.tbl-end {
  flex: none;
  width: 378px;
  height: 5px;
  box-sizing: border-box;
  border: 1px solid #ccc;
  border-top: 3px solid #fff;
  background: #ddd;
}
.section {
  flex: none;
  width: 378px;
  height: 24px;
  box-sizing: border-box;
  border-bottom: 2px solid #d4d4d4;
  display: flex;
  align-items: center;
  justify-content: space-between;
  padding: 2px 5px 0 7px;
  font-size: 14px;
  color: #4aa0cf;
}
.canvas {
  flex: none;
  width: 940px;
  height: 527px;
  box-sizing: border-box;
  background: #ccc;
  border-bottom: 1px solid #888;
  font-family: "Liberation Sans", "Noto Sans CJK SC", sans-serif;
}
.canvas svg { display: block; }
.dwg-text text { fill: #222; font-family: "Noto Sans CJK SC", sans-serif; font-weight: 300; }
.dwg-text .sheetlbl { fill: #444; font-family: "Noto Sans", "Noto Sans CJK SC", sans-serif; }
.thin { fill: #333; font-family: Roboto, "Liberation Sans", sans-serif; font-weight: 300; }
.thin.blue { fill: #4a6cc8; }

/* status + task bar */
.status {
  flex: none;
  height: 22px;
  box-sizing: border-box;
  padding-bottom: 3px;
  display: flex;
  align-items: center;
  font-size: 11px;
  font-weight: 500;
  color: #111;
}
.st-left { margin-left: 3px; width: 626px; }
.st-mid { width: 646px; }
.st-full { margin-left: 5px; }
.taskbar {
  flex: 1;
  position: relative;
  display: flex;
  align-items: flex-start;
  background: #141a20;
  border-top: 1px solid #4a545e;
}
.orb {
  width: 29px;
  height: 29px;
  margin-left: 12px;
  border-radius: 50%;
  background: #3a90c8;
  border: 1px solid #bcd;
  box-sizing: border-box;
}
.task {
  flex: none;
  height: 8px;
  border-radius: 2px 2px 0 0;
  display: flex;
  justify-content: center;
}
.task.light { width: 57px; margin-left: 19px; background: #e8e8e8; }
.task.grey { width: 52px; margin-left: 21px; background: #777; }
.task.t2 { width: 57px; margin-left: 10px; }
.task.t3 { width: 58px; margin-left: 5px; }
.task b { display: block; width: 18px; height: 8px; border-radius: 2px 2px 0 0; }
.y { background: #c8a860; }
.bl { background: #1e80e8; }
.gr { background: linear-gradient(90deg, #eee, #6a2); }
.y2 { background: linear-gradient(90deg, #f3c020 50%, #90d030 50%); }
.spot { flex: none; height: 7px; margin-top: 1px; }
.round { border-radius: 50% 50% 0 0; }
.red { background: #e02020; }
.s1 { width: 17px; margin-left: 26px; }
.s2 { width: 32px; margin-left: 36px; background: #d82030; border-radius: 0; }
.s3 { width: 31px; margin-left: 31px; }
.s4 { width: 23px; margin-left: 35px; background: #b8d0e0; }
.clock {
  position: absolute;
  left: 1300px;
  top: 3px;
  color: #fff;
  font: 700 11px "Liberation Sans", sans-serif;
  letter-spacing: 1px;
}
.show {
  position: absolute;
  right: 0;
  top: 0;
  width: 14px;
  height: 8px;
  background: #8a8a8a;
}
.mark-wm {
  position: absolute;
  left: 1080px;
  top: 636px;
  pointer-events: none;
}
</style>
